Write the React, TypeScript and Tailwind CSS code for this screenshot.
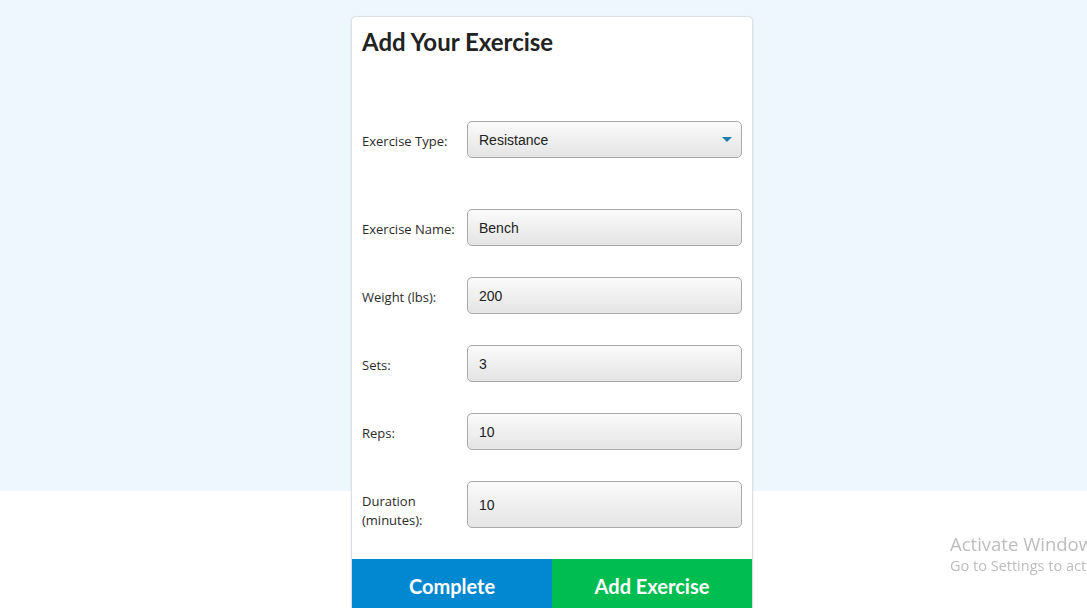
import { useState } from "react";

// one labelled row of the form
function Field({
  label,
  value,
  onChange,
  tall,
}: {
  label: React.ReactNode;
  value: string;
  onChange: (v: string) => void;
  tall?: boolean;
}) {
  return (
    <div className={`flex ${tall ? "h-[47px] items-start" : "items-center"}`}>
      <label
        className={`w-[105px] shrink-0 font-['Open_Sans',sans-serif] text-[13px] leading-[19px] text-[#2b2b2b] ${tall ? "pt-[11px]" : "pt-[3px]"}`}
      >
        {label}
      </label>
      <input
        type="text"
        value={value}
        onChange={(e) => onChange(e.target.value)}
        className={`flex-1 ${tall ? "h-[47px]" : "h-[37px]"} rounded-[5px] border border-[#aaa] bg-[linear-gradient(to_bottom,#fbfbfb,#e4e4e4)] px-[11px] pt-[1px] font-['Liberation_Sans',Arial,sans-serif] text-[14px] text-[#222] outline-none`}
      />
    </div>
  );
}

export default function App() {
  const [type, setType] = useState("Resistance");
  const [name, setName] = useState("Bench");
  const [weight, setWeight] = useState("200");
  const [sets, setSets] = useState("3");
  const [reps, setReps] = useState("10");
  const [duration, setDuration] = useState("10");

  return (
    <main className="flex min-h-[608px] justify-center overflow-hidden bg-[linear-gradient(to_bottom,#eef6fe_491px,#ffffff_491px)] pl-[17px] pt-[16px] font-['Lato',sans-serif]">
      <div className="w-[402px] self-start rounded-[5px] border border-[#dcdfe3] bg-white shadow-[0_1px_3px_rgba(0,0,0,0.08)]">
        <h2 className="px-[10px] pt-[9px] text-[24px] font-bold leading-[32px] text-[#222]">Add Your Exercise</h2>

        <form className="mt-[63px] flex flex-col gap-[31px] pl-[10px] pr-[10px]">
          <div className="mb-[20px] flex items-center">
            <label className="w-[105px] shrink-0 pt-[3px] font-['Open_Sans',sans-serif] text-[13px] leading-[19px] text-[#2b2b2b]">
              Exercise Type:
            </label>
            <div className="relative flex-1">
              <select
                value={type}
                onChange={(e) => setType(e.target.value)}
                className="h-[37px] w-full appearance-none rounded-[5px] border border-[#aaa] bg-[linear-gradient(to_bottom,#fbfbfb,#e4e4e4)] px-[11px] pt-[1px] font-['Liberation_Sans',Arial,sans-serif] text-[14px] text-[#222] outline-none"
              >
                <option>Resistance</option>
                <option>Cardio</option>
              </select>
              <span className="pointer-events-none absolute right-[10px] top-[16px] h-0 w-0 border-x-[5px] border-t-[5px] border-x-transparent border-t-[#1b7fb4]" />
            </div>
          </div>

          <Field label="Exercise Name:" value={name} onChange={setName} />
          <Field label="Weight (lbs):" value={weight} onChange={setWeight} />
          <Field label="Sets:" value={sets} onChange={setSets} />
          <Field label="Reps:" value={reps} onChange={setReps} />
          <Field
            label={
              <>
                Duration
                <br />
                (minutes):
              </>
            }
            value={duration}
            onChange={setDuration}
            tall
          />
        </form>

        <div className="mt-[31px] flex">
          <button className="h-[54px] flex-1 bg-[#0288d1] text-[20px] font-bold text-white">Complete</button>
          <button className="h-[54px] flex-1 bg-[#00bd52] text-[20px] font-bold text-white">Add Exercise</button>
        </div>
      </div>

      {/* windows watermark */}
      <div className="pointer-events-none fixed left-[950px] top-[532px] whitespace-nowrap font-['Open_Sans',sans-serif] text-[#bdbdbd]">
        <div className="text-[18.5px] leading-[24px]">Activate Windows</div>
        <div className="text-[14.5px] leading-[20px]">Go to Settings to activate Windows.</div>
      </div>
    </main>
  );
}
